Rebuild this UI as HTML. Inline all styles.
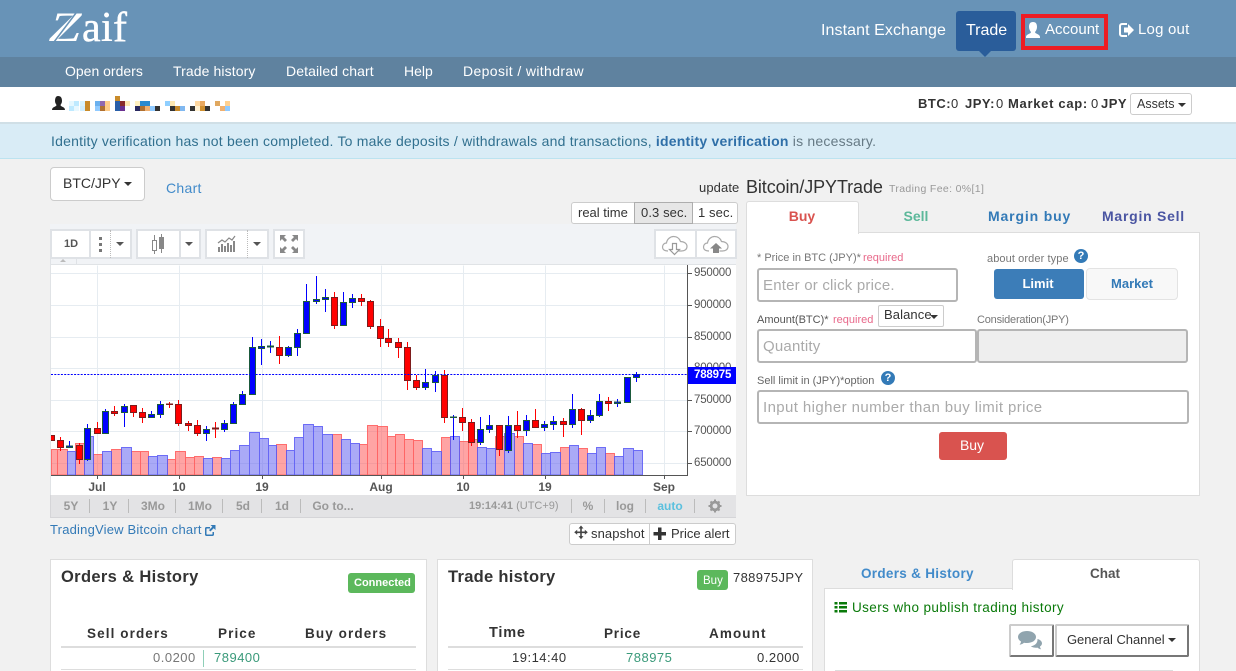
<!DOCTYPE html>
<html lang="en"><head><meta charset="utf-8"><title>Zaif BTC/JPY Trade</title>
<style>
html,body{margin:0;padding:0;width:1236px;height:671px;overflow:hidden;background:#f1f1f1}
body{position:relative;font-family:"Liberation Sans",sans-serif;font-size:13px;color:#333}
.t{position:absolute;white-space:nowrap;line-height:20px;height:20px}
.b{position:absolute;box-sizing:border-box}
.c{position:absolute;width:0;height:0;border-left:4px solid transparent;border-right:4px solid transparent;border-top:4px solid #333}
svg{position:absolute;left:0;top:0}
.w{color:#fff}
.ctr{text-align:center;transform:translateX(-50%)}
.bb{font-weight:bold;color:#999;font-size:12px}
.ax{font-size:11.500px;color:#555;letter-spacing:-.2px}
.xl{font-size:12px;font-weight:bold;color:#555}
.lb{font-size:11px;color:#777}
.ph{font-size:15px;color:#aaa;letter-spacing:.2px}
.inp{background:#fff;border:2px solid #b5b5b5;border-radius:3px}
.tb{background:#fff;border:2px solid #dfe2e6}
.th{font-weight:bold;font-size:13.500px;letter-spacing:1.1px;color:#333}
</style></head><body>

<div class="b" style="left:0;top:0;width:1236px;height:57px;background:#6893b7"></div>
<div class="b" style="left:0;top:57px;width:1236px;height:30px;background:#5f829f"></div>
<div class="b" style="left:0;top:87px;width:1236px;height:36px;background:#fff"></div>
<div class="b" style="left:0;top:122px;width:1236px;height:37px;background:#d9ecf6;border-top:2px solid #d0dfe6;border-bottom:1px solid #bce3f0"></div>

<svg width="1236" height="60" style="z-index:2">
<text x="0" y="41" transform="translate(50 0) skewX(-14) translate(7 0) scale(1.16 1)" font-family="Liberation Serif" font-weight="bold" font-size="42" fill="#fff">Z</text>
<path d="M54 42L76 13" stroke="#6893b7" stroke-width="1.500" fill="none"/>
<text x="82" y="41" font-family="Liberation Serif" font-size="42" fill="#fff" stroke="#fff" stroke-width=".4" textLength="45">aif</text>
</svg>

<span class="t w" style="left:821px;top:21px;font-size:16px;letter-spacing:.08px">Instant Exchange</span>
<div class="b" style="left:956px;top:11px;width:60px;height:40px;background:#2a5d9a;border-radius:3px"></div>
<div class="b" style="left:979px;top:51px;width:0;height:0;border-left:6px solid transparent;border-right:6px solid transparent;border-top:6px solid #2a5d9a"></div>
<span class="t w" style="left:966px;top:21px;font-size:16px">Trade</span>
<div class="b" style="left:1021px;top:14px;width:87px;height:36px;border:4px solid #ed1c24"></div>
<span class="t w" style="left:1045px;top:20px;font-size:15px">Account</span>
<span class="t w" style="left:1138px;top:20px;font-size:15px;letter-spacing:.2px">Log out</span>
<svg width="1236" height="60" style="z-index:2">
<path d="M1033 22c3 0 4 2 4 5 0 2-1 4-2 5 0 2 5 2 5 5v1h-14v-1c0-3 5-3 5-5-1-1-2-3-2-5 0-3 1-5 4-5z" fill="#fff"/>
<path d="M1127 24h-5a2 2 0 0 0-2 2v8a2 2 0 0 0 2 2h5" stroke="#fff" stroke-width="2" fill="none"/>
<path d="M1124 27.500h4V24l6 6-6 6v-3.500h-4z" fill="#fff"/>
</svg>

<span class="t w" style="left:65px;top:61px;font-size:14px">Open orders</span>
<span class="t w" style="left:173px;top:61px;font-size:14px;letter-spacing:.1px">Trade history</span>
<span class="t w" style="left:286px;top:61px;font-size:14px;letter-spacing:.1px">Detailed chart</span>
<span class="t w" style="left:404px;top:61px;font-size:14px">Help</span>
<span class="t w" style="left:463px;top:61px;font-size:14px;letter-spacing:.37px">Deposit / withdraw</span>

<svg width="240" height="120" style="z-index:2">
<path d="M58 96c3 0 4 2 4 5 0 2-1 3-1.500 4 0 2 4.500 1.500 4.500 5h-13c0-3.500 4.500-3 4.500-5-.5-1-1.500-2-1.500-4 0-3 1-5 3-5z" fill="#222"/>
<g shape-rendering="crispEdges">
<rect x="69" y="101" width="5" height="5" fill="#e6f8ff"/><rect x="74" y="101" width="5" height="5" fill="#bfeaff"/><rect x="80" y="101" width="5" height="5" fill="#d8f4ff"/><rect x="85" y="101" width="5" height="5" fill="#c98b2a"/>
<rect x="95" y="101" width="5" height="5" fill="#6ab0ee"/><rect x="100" y="101" width="5" height="5" fill="#9068b0"/><rect x="105" y="101" width="5" height="5" fill="#ffcc88"/>
<rect x="115" y="96" width="5" height="5" fill="#c98b2a"/><rect x="115" y="101" width="5" height="5" fill="#2a5fa8"/><rect x="120" y="101" width="5" height="5" fill="#8a2a2a"/><rect x="125" y="101" width="5" height="5" fill="#ffe6b0"/>
<rect x="135" y="101" width="5" height="5" fill="#fff0c0"/><rect x="140" y="101" width="10" height="5" fill="#2a8ad0"/>
<rect x="165" y="101" width="5" height="5" fill="#8fcfff"/><rect x="170" y="101" width="5" height="5" fill="#ffe8b0"/>
<rect x="195" y="101" width="5" height="5" fill="#ffd8a0"/><rect x="200" y="101" width="5" height="5" fill="#e8a860"/>
<rect x="215" y="101" width="5" height="5" fill="#e0a860"/><rect x="225" y="101" width="5" height="5" fill="#ffd090"/>
<rect x="69" y="106" width="5" height="5" fill="#bfeaff"/><rect x="74" y="106" width="5" height="5" fill="#e8f8ff"/><rect x="80" y="106" width="5" height="5" fill="#cfeeff"/><rect x="85" y="106" width="5" height="5" fill="#c98b2a"/>
<rect x="95" y="106" width="5" height="5" fill="#90caff"/><rect x="100" y="106" width="5" height="5" fill="#b07030"/><rect x="105" y="106" width="5" height="5" fill="#ffcc88"/>
<rect x="115" y="106" width="5" height="5" fill="#2a5fa8"/><rect x="120" y="106" width="5" height="5" fill="#6a3090"/>
<rect x="135" y="106" width="5" height="5" fill="#2a2a60"/><rect x="140" y="106" width="5" height="5" fill="#b07030"/><rect x="145" y="106" width="5" height="5" fill="#f0b070"/><rect x="150" y="106" width="5" height="5" fill="#90caff"/><rect x="155" y="106" width="5" height="5" fill="#333"/>
<rect x="170" y="106" width="5" height="5" fill="#333"/><rect x="175" y="106" width="5" height="5" fill="#c98b2a"/><rect x="180" y="106" width="5" height="5" fill="#80b8f0"/>
<rect x="190" y="106" width="5" height="5" fill="#333"/><rect x="195" y="106" width="5" height="5" fill="#fff0d0"/><rect x="200" y="106" width="5" height="5" fill="#d09030"/><rect x="205" y="106" width="5" height="5" fill="#333"/>
<rect x="220" y="106" width="5" height="5" fill="#f0b070"/><rect x="225" y="106" width="5" height="5" fill="#90caff"/>
</g></svg>

<span class="t" style="left:918px;top:94px;font-weight:bold;letter-spacing:.5px">BTC:</span>
<span class="t" style="left:951px;top:94px">0</span>
<span class="t" style="left:965px;top:94px;font-weight:bold;letter-spacing:.5px">JPY:</span>
<span class="t" style="left:996px;top:94px">0</span>
<span class="t" style="left:1008px;top:94px;font-weight:bold;letter-spacing:.7px">Market cap:</span>
<span class="t" style="left:1091px;top:94px">0</span>
<span class="t" style="left:1101px;top:94px;font-weight:bold;letter-spacing:.5px">JPY</span>
<div class="b" style="left:1130px;top:93px;width:62px;height:22px;background:#fff;border:1px solid #ccc;border-radius:3px"></div>
<span class="t" style="left:1137px;top:94px;font-size:12.500px">Assets</span>
<div class="c" style="left:1178px;top:103px"></div>

<span class="t" style="left:51px;top:131px;font-size:14px;color:#31708f;letter-spacing:.21px">Identity verification has not been completed. To make deposits / withdrawals and transactions, <b style="color:#2f6fa8">identity verification</b> <span style="color:#667a85">is necessary.</span></span>

<div class="b" style="left:50px;top:167px;width:95px;height:34px;background:#fff;border:1px solid #ccc;border-radius:4px"></div>
<span class="t" style="left:63px;top:173px;font-size:14px">BTC/JPY</span>
<div class="c" style="left:124px;top:182px"></div>
<span class="t" style="left:166px;top:178px;font-size:14px;color:#428bca;letter-spacing:.3px">Chart</span>
<span class="t" style="left:699px;top:178px;font-size:13px;letter-spacing:.1px">update</span>

<div class="b" style="left:50px;top:224px;width:686px;height:294px;background:#f1f3f6"></div>

<div class="b" style="left:571px;top:202px;width:167px;height:22px;background:#fff;border:1px solid #ccc;border-radius:3px"></div>
<div class="b" style="left:634px;top:202px;width:59px;height:22px;background:#e6e6e6;border:1px solid #adadad"></div>
<span class="t" style="left:578px;top:203px">real time</span>
<span class="t" style="left:641px;top:203px;letter-spacing:.1px">0.3 sec.</span>
<span class="t" style="left:698px;top:203px;letter-spacing:.1px">1 sec.</span>

<div class="b tb" style="left:50px;top:229px;width:82px;height:30px"></div>
<div class="b" style="left:89px;top:230px;width:2px;height:28px;background:#dfe2e6"></div>
<div class="b" style="left:110px;top:230px;width:0;height:28px;border-left:1px dotted #bbb"></div>
<span class="t" style="left:64px;top:234px;font-size:11px;color:#555;font-weight:bold">1D</span>
<div class="b" style="left:99px;top:237px;width:3px;height:3px;background:#777"></div>
<div class="b" style="left:99px;top:243px;width:3px;height:3px;background:#777"></div>
<div class="b" style="left:99px;top:249px;width:3px;height:3px;background:#777"></div>
<div class="c" style="left:116px;top:242px;border-top-color:#555"></div>
<div class="b tb" style="left:136px;top:229px;width:65px;height:30px"></div>
<div class="b" style="left:179px;top:230px;width:2px;height:28px;background:#dfe2e6"></div>
<div class="c" style="left:185px;top:242px;border-top-color:#555"></div>
<div class="b tb" style="left:205px;top:229px;width:64px;height:30px"></div>
<div class="b" style="left:247px;top:230px;width:0;height:28px;border-left:1px dotted #bbb"></div>
<div class="c" style="left:253px;top:242px;border-top-color:#555"></div>
<div class="b tb" style="left:273px;top:229px;width:32px;height:30px"></div>
<div class="b tb" style="left:654px;top:229px;width:83px;height:30px"></div>
<div class="b" style="left:695px;top:230px;width:2px;height:28px;background:#dfe2e6"></div>
<div class="b" style="left:50px;top:259px;width:27px;height:6px;background:#f1f3f6;border-right:1px solid #dfe2e6;border-left:1px solid #dfe2e6"></div>
<div class="b" style="left:60px;top:259px;width:0;height:0;border-left:3px solid transparent;border-right:3px solid transparent;border-bottom:3px solid #bbb"></div>

<div class="b" style="left:50px;top:264px;width:686px;height:231px;background:#fff;border-left:1px solid #e0e3e6;border-top:1px solid #e0e3e6"></div>

<svg width="1236" height="671" style="z-index:1">
<path d="M154.500 235V254" stroke="#888" fill="none"/><rect x="152.500" y="240.500" width="4" height="10" fill="#fff" stroke="#888"/>
<path d="M161.500 234V253" stroke="#888" fill="none"/><rect x="159" y="237" width="5" height="12" fill="#888"/>
<g fill="#888">
<rect x="218" y="247" width="2" height="5"/><rect x="221" y="244" width="2" height="8"/><rect x="224" y="246" width="2" height="6"/><rect x="227" y="243" width="2" height="9"/><rect x="230" y="245" width="2" height="7"/><rect x="233" y="241" width="2" height="11"/>
</g>
<path d="M218 243l4-3 3 2 4-4 3 2 3-4" stroke="#888" stroke-width="1.200" fill="none"/>
<path d="M280 235h6l-2 2 3 3-2 2-3-3-2 2zM298 235v6l-2-2-3 3-2-2 3-3-2-2zM280 253v-6l2 2 3-3 2 2-3 3 2 2zM298 253h-6l2-2-3-3 2-2 3 3 2-2z" fill="#888"/>
<path d="M668 251c-4 0-5.500-2-5.500-4 0-2.500 2-4 4-4 .5-4 4-6.500 7-6.500 3.500 0 6 2 7 5 3.500 0 6.500 2 6.500 5s-2.500 4.500-5.500 4.500h-3" fill="none" stroke="#aaa" stroke-width="1.200"/>
<path d="M672.500 243.500h4v6h3l-5 5-5-5h3z" fill="#fff" stroke="#999" stroke-width="1.200"/>
<path d="M709 251c-4 0-5.500-2-5.500-4 0-2.500 2-4 4-4 .5-4 4-6.500 7-6.500 3.500 0 6 2 7 5 3.500 0 6.500 2 6.500 5s-2.500 4.500-5.500 4.500h-3" fill="none" stroke="#aaa" stroke-width="1.200"/>
<path d="M716 243l6 5.500h-3V253h-6v-4.500h-3z" fill="#888"/>

<g stroke="#e6ecf1" stroke-width="1">
<path d="M97.500 265.500V475M179.500 265.500V475M262.500 265.500V475M381.500 265.500V475M463.500 265.500V475M545.500 265.500V475M664.500 265.500V475"/>
<path d="M51 273.500H687M51 305.500H687M51 337.500H687M51 368.500H687M51 400.500H687M51 431.500H687M51 463.500H687"/>
</g>

<svg x="51" y="265" width="636" height="210" viewBox="51 265 636 210" style="position:static;overflow:hidden">
<path fill="#ff5a5a" fill-opacity=".55" stroke="#ff5a5a" stroke-opacity=".85" d="M51.500 449.500H57.500V475H51.500zM57.500 449.500H67.500V475H57.500zM75.500 443.500H84.500V475H75.500zM93.500 454.500H102.500V475H93.500zM111.500 449.500H121.500V475H111.500zM131.500 451.500H140.500V475H131.500zM140.500 451.500H148.500V475H140.500zM167.500 459.500H175.500V475H167.500zM175.500 451.500H185.500V475H175.500zM185.500 457.500H194.500V475H185.500zM194.500 456.500H203.500V475H194.500zM212.500 457.500H221.500V475H212.500zM276.500 444.500H286.500V475H276.500zM332.500 434.500H341.500V475H332.500zM359.500 444.500H367.500V475H359.500zM367.500 425.500H377.500V475H367.500zM377.500 426.500H387.500V475H377.500zM387.500 436.500H395.500V475H387.500zM395.500 434.500H404.500V475H395.500zM404.500 439.500H413.500V475H404.500zM413.500 440.500H422.500V475H413.500zM441.500 437.500H450.500V475H441.500zM459.500 441.500H468.500V475H459.500zM468.500 439.500H477.500V475H468.500zM495.500 436.500H504.500V475H495.500zM514.500 436.500H523.500V475H514.500zM532.500 444.500H541.500V475H532.500zM560.500 447.500H569.500V475H560.500zM578.500 448.500H587.500V475H578.500zM605.500 453.500H614.500V475H605.500z"/>
<path fill="#6464f0" fill-opacity=".55" stroke="#5a5af5" stroke-opacity=".85" d="M67.500 451.500H75.500V475H67.500zM84.500 436.500H93.500V475H84.500zM102.500 451.500H111.500V475H102.500zM121.500 447.500H131.500V475H121.500zM148.500 456.500H157.500V475H148.500zM157.500 455.500H167.500V475H157.500zM203.500 458.500H212.500V475H203.500zM221.500 458.500H230.500V475H221.500zM230.500 450.500H239.500V475H230.500zM239.500 445.500H249.500V475H239.500zM249.500 432.500H259.500V475H249.500zM259.500 438.500H268.500V475H259.500zM268.500 445.500H276.500V475H268.500zM286.500 450.500H294.500V475H286.500zM294.500 437.500H303.500V475H294.500zM303.500 424.500H313.500V475H303.500zM313.500 426.500H322.500V475H313.500zM322.500 434.500H332.500V475H322.500zM341.500 439.500H350.500V475H341.500zM350.500 443.500H359.500V475H350.500zM422.500 448.500H431.500V475H422.500zM431.500 451.500H441.500V475H431.500zM450.500 436.500H459.500V475H450.500zM477.500 447.500H486.500V475H477.500zM486.500 448.500H495.500V475H486.500zM504.500 433.500H514.500V475H504.500zM523.500 443.500H532.500V475H523.500zM541.500 453.500H550.500V475H541.500zM550.500 452.500H560.500V475H550.500zM569.500 445.500H578.500V475H569.500zM587.500 453.500H596.500V475H587.500zM596.500 447.500H605.500V475H596.500zM614.500 456.500H623.500V475H614.500zM623.500 448.500H633.500V475H623.500zM633.500 450.500H642.500V475H633.500z"/>

<path stroke="#ff0000" fill="none" d="M60.500 437V451M79.500 443V464M97.500 422V433M114.500 406V416M133.500 405V417M142.500 408V423M169.500 402V408M178.500 400V426M188.500 421V431M197.500 420V436M215.500 422V438M279.500 336V364M334.500 292V329M361.500 294V306M370.500 300V329M380.500 319V347M388.500 329V347M398.500 338V358M407.500 342V390M416.500 375V390M444.500 370V423M462.500 408V431M471.500 419V446M499.500 425V456M517.500 411V438M535.500 409V428M563.500 418V437M581.500 408V435M608.500 397V411"/>
<path stroke="#0000ff" fill="none" d="M69.500 441V448M87.500 424V461M105.500 409V434M124.500 404V427M151.500 411V417M160.500 401V418M206.500 426V441M224.500 420V432M233.500 402V423M242.500 391V404M252.500 337V394M261.500 339V365M270.500 341V353M288.500 346V357M297.500 329V356M306.500 284V333M316.500 276V304M325.500 289V312M343.500 292V325M352.500 294V308M425.500 369V390M435.500 371V392M453.500 415V440M480.500 417V445M489.500 415V433M508.500 416V453M526.500 415V436M544.500 421V431M553.500 416V430M572.500 394V428M590.500 410V423M599.500 394V417M617.500 399V407M627.500 377V402M636.500 372V382"/>
<path fill="#ff0000" stroke="#7d1c1c" d="M48.500 435.500h6v5h-6zM57.500 440.500h6v7h-6zM76.500 445.500h6v14h-6zM94.500 428.500h6v5h-6zM111.500 411.500h6v2h-6zM130.500 405.500h6v7h-6zM139.500 412.500h6v5h-6zM166.500 404h6v.5h-6zM175.500 404.500h6v19h-6zM185.500 423.500h6v2h-6zM194.500 425.500h6v8h-6zM212.500 428h6v1h-6zM276.500 347.500h6v8h-6zM331.500 297.500h6v28h-6zM358.500 298.500h6v3h-6zM367.500 301.500h6v25h-6zM377.500 326.500h6v12h-6zM385.500 338.500h6v4h-6zM395.500 342.500h6v5h-6zM404.500 347.500h6v33h-6zM413.500 380.500h6v7h-6zM441.500 375.500h6v42h-6zM459.500 417.500h6v5h-6zM468.500 422.500h6v20h-6zM496.500 425.500h6v24h-6zM514.500 425.500h6v5h-6zM532.500 420.500h6v7h-6zM560.500 421.500h6v3h-6zM578.500 409.500h6v11h-6zM605.500 401.500h6v2h-6z"/>
<path fill="#0000ff" stroke="#1b5a3c" d="M66.500 446h6v1.500h-6zM84.500 428.500h6v31h-6zM102.500 411.500h6v22h-6zM121.500 406.500h6v6h-6zM148.500 414.500h6v3h-6zM157.500 404.500h6v10h-6zM203.500 429.500h6v4h-6zM221.500 423.500h6v6h-6zM230.500 404.500h6v19h-6zM239.500 394.500h6v10h-6zM249.500 347.500h6v47h-6zM258.500 346.500h6v2h-6zM267.500 346h6v1h-6zM285.500 347.500h6v8h-6zM294.500 333.500h6v14h-6zM303.500 301.500h6v32h-6zM313.500 299.500h6v2h-6zM322.500 297.500h6v2h-6zM340.500 302.500h6v23h-6zM349.500 298.500h6v4h-6zM422.500 382.500h6v5h-6zM432.500 375.500h6v7h-6zM450.500 417h6v.5h-6zM477.500 429.500h6v13h-6zM486.500 425.500h6v4h-6zM505.500 425.500h6v25h-6zM523.500 420.500h6v10h-6zM541.500 424.500h6v3h-6zM550.500 421.500h6v3h-6zM569.500 409.500h6v15h-6zM587.500 415.500h6v5h-6zM596.500 401.500h6v14h-6zM614.500 402h6v1.500h-6zM624.500 377.500h6v25h-6zM633.500 374.500h6v3h-6z"/>
</svg>

<path d="M51 374.500H687" stroke="#0000ff" stroke-dasharray="2 1.300" fill="none"/>
<path d="M51 475.500H688M687.500 265V476" stroke="#555" stroke-width="1" fill="none"/>
<path d="M97.500 476V479M179.500 476V479M262.500 476V479M381.500 476V479M463.500 476V479M545.500 476V479M664.500 476V479M688 273.500h4M688 305.500h4M688 337.500h4M688 400.500h4M688 431.500h4M688 463.500h4" stroke="#555" fill="none"/>

<path d="M207 527h3v1.500h-3c-.5 0-.5.3-.5.5v5c0 .5.300.5.500.5h5c.3 0 .5-.2.5-.5v-2h1.500v2.500c0 1-.8 1.500-1.500 1.500h-6c-1 0-1.500-.7-1.500-1.500v-6c0-1 .6-1.500 1.500-1.500zM210.500 525H215.500v5l-1.800-1.800-3.300 3.300-1.400-1.400 3.300-3.300z" fill="#337ab7"/>
<circle cx="715" cy="506" r="4" fill="none" stroke="#999" stroke-width="2.500"/>
<path d="M715 499.500v13M708.500 506h13M710.500 501.500l9 9M719.500 501.500l-9 9" stroke="#999" stroke-width="2" fill="none"/>
<circle cx="715" cy="506" r="2.500" fill="#e3e3e5"/>
</svg>

<span class="t ax" style="left:694px;top:263px;z-index:2">950000</span>
<span class="t ax" style="left:694px;top:295px;z-index:2">900000</span>
<span class="t ax" style="left:694px;top:327px;z-index:2">850000</span>
<span class="t ax" style="left:694px;top:358px;z-index:2">800000</span>
<span class="t ax" style="left:694px;top:390px;z-index:2">750000</span>
<span class="t ax" style="left:694px;top:421px;z-index:2">700000</span>
<span class="t ax" style="left:694px;top:453px;z-index:2">650000</span>
<div class="b" style="left:688px;top:367px;width:48px;height:17px;background:#0000ff;z-index:2"></div>
<span class="t" style="left:694px;top:365px;font-size:11.500px;font-weight:bold;color:#fff;letter-spacing:-.2px;z-index:3">788975</span>

<span class="t xl ctr" style="left:97px;top:477px;z-index:2">Jul</span>
<span class="t xl ctr" style="left:179px;top:477px;z-index:2">10</span>
<span class="t xl ctr" style="left:262px;top:477px;z-index:2">19</span>
<span class="t xl ctr" style="left:381px;top:477px;z-index:2">Aug</span>
<span class="t xl ctr" style="left:463px;top:477px;z-index:2">10</span>
<span class="t xl ctr" style="left:545px;top:477px;z-index:2">19</span>
<span class="t xl ctr" style="left:664px;top:477px;z-index:2">Sep</span>

<div class="b" style="left:50px;top:495px;width:686px;height:23px;background:#e3e3e5;border-left:1px solid #d5d5d8;border-bottom:1px solid #d5d5d8"></div>
<span class="t bb ctr" style="left:71px;top:496px">5Y</span>
<span class="t bb ctr" style="left:110px;top:496px">1Y</span>
<span class="t bb ctr" style="left:153px;top:496px">3Mo</span>
<span class="t bb ctr" style="left:200px;top:496px">1Mo</span>
<span class="t bb ctr" style="left:243px;top:496px">5d</span>
<span class="t bb ctr" style="left:282px;top:496px">1d</span>
<span class="t bb ctr" style="left:333px;top:496px">Go to...</span>
<span class="t bb" style="left:469px;top:496px;font-size:11px">19:14:41 <span style="font-weight:normal">(UTC+9)</span></span>
<span class="t bb ctr" style="left:588px;top:496px">%</span>
<span class="t bb ctr" style="left:625px;top:496px">log</span>
<span class="t bb ctr" style="left:670px;top:496px;color:#5bc0de">auto</span>
<div class="b" style="left:89px;top:499px;width:1px;height:14px;background:#bbb"></div>
<div class="b" style="left:128px;top:499px;width:1px;height:14px;background:#bbb"></div>
<div class="b" style="left:175px;top:499px;width:1px;height:14px;background:#bbb"></div>
<div class="b" style="left:222px;top:499px;width:1px;height:14px;background:#bbb"></div>
<div class="b" style="left:261px;top:499px;width:1px;height:14px;background:#bbb"></div>
<div class="b" style="left:300px;top:499px;width:1px;height:14px;background:#bbb"></div>
<div class="b" style="left:571px;top:499px;width:1px;height:14px;background:#bbb"></div>
<div class="b" style="left:604px;top:499px;width:1px;height:14px;background:#bbb"></div>
<div class="b" style="left:645px;top:499px;width:1px;height:14px;background:#bbb"></div>
<div class="b" style="left:694px;top:499px;width:1px;height:14px;background:#bbb"></div>

<span class="t" style="left:50px;top:520px;color:#337ab7;letter-spacing:.2px">TradingView Bitcoin chart</span>
<div class="b" style="left:569px;top:523px;width:167px;height:22px;background:#fff;border:1px solid #ccc;border-radius:3px"></div>
<div class="b" style="left:649px;top:523px;width:1px;height:22px;background:#ccc"></div>
<span class="t" style="left:591px;top:524px;letter-spacing:.1px">snapshot</span>
<span class="t" style="left:671px;top:524px">Price alert</span>
<svg width="740" height="560" style="z-index:3">
<path d="M581 525.500l2.500 3h-1.700v3h3v-1.700l3 2.500-3 2.500v-1.700h-3v3h1.700l-2.500 3-2.500-3h1.700v-3h-3v1.700l-3-2.500 3-2.500v1.700h3v-3h-1.700z" fill="#444"/>
<path d="M658 527.500h3.500V532H666v3.500h-4.500V540H658v-4.500h-4.500V532h4.500z" fill="#333"/>
</svg>

<span class="t" style="left:746px;top:177px;font-size:18px;letter-spacing:-.1px">Bitcoin/JPYTrade</span>
<span class="t" style="left:889px;top:179px;font-size:10.500px;color:#999;letter-spacing:.35px">Trading Fee: 0%[1]</span>
<div class="b" style="left:746px;top:232px;width:454px;height:264px;background:#fff;border:1px solid #ddd"></div>
<div class="b" style="left:746px;top:201px;width:113px;height:33px;background:#fff;border:1px solid #ddd;border-bottom:0;border-radius:3px 3px 0 0"></div>
<span class="t ctr" style="left:802px;top:206px;font-size:14px;font-weight:bold;color:#d9534f">Buy</span>
<span class="t ctr" style="left:916px;top:206px;font-size:14px;font-weight:bold;color:#5cb89a">Sell</span>
<span class="t" style="left:988px;top:206px;font-size:14px;font-weight:bold;color:#337ab7;letter-spacing:.85px">Margin buy</span>
<span class="t" style="left:1102px;top:206px;font-size:14px;font-weight:bold;color:#4a55a2;letter-spacing:.75px">Margin Sell</span>

<span class="t lb" style="left:757px;top:248px">* Price in BTC (JPY)*</span>
<span class="t lb" style="left:863px;top:248px;color:#e8688a">required</span>
<span class="t lb" style="left:987px;top:249px;letter-spacing:.1px">about order type</span>
<div class="b inp" style="left:757px;top:268px;width:201px;height:34px"></div>
<span class="t ph" style="left:763px;top:276px">Enter or click price.</span>
<div class="b" style="left:994px;top:269px;width:90px;height:30px;background:#3c7db8;border-radius:3px"></div>
<span class="t ctr w" style="left:1038px;top:274px;font-weight:bold">Limit</span>
<div class="b" style="left:1086px;top:268px;width:92px;height:32px;background:#f8f8f8;border:1px solid #e3e3e3;border-radius:4px"></div>
<span class="t ctr" style="left:1132px;top:274px;font-weight:bold;color:#337ab7">Market</span>
<span class="t lb" style="left:757px;top:310px;color:#555">Amount(BTC)*</span>
<span class="t lb" style="left:833px;top:310px;color:#e8688a">required</span>
<div class="b" style="left:878px;top:305px;width:66px;height:22px;background:#fff;border:1px solid #ccc;border-radius:2px"></div>
<span class="t" style="left:884px;top:305px;font-size:13px;letter-spacing:.1px">Balance</span>
<div class="c" style="left:930px;top:315px"></div>
<span class="t lb" style="left:977px;top:310px;letter-spacing:-.2px">Consideration(JPY)</span>
<div class="b inp" style="left:757px;top:329px;width:220px;height:34px"></div>
<span class="t ph" style="left:763px;top:337px">Quantity</span>
<div class="b inp" style="left:977px;top:329px;width:211px;height:34px;background:#eee"></div>
<span class="t lb" style="left:757px;top:371px;color:#666">Sell limit in (JPY)*option</span>
<div class="b inp" style="left:757px;top:390px;width:432px;height:34px"></div>
<span class="t ph" style="left:763px;top:398px;letter-spacing:.4px">Input higher number than buy limit price</span>
<div class="b" style="left:939px;top:432px;width:68px;height:28px;background:#d9534f;border-radius:3px"></div>
<span class="t ctr w" style="left:972px;top:435px;font-size:14px">Buy</span>
<div class="b" style="left:1074px;top:249px;width:14px;height:14px;border-radius:50%;background:#337ab7;color:#fff;font:bold 11px/14px 'Liberation Sans',sans-serif;text-align:center">?</div>
<div class="b" style="left:881px;top:371px;width:14px;height:14px;border-radius:50%;background:#337ab7;color:#fff;font:bold 11px/14px 'Liberation Sans',sans-serif;text-align:center">?</div>

<div class="b" style="left:50px;top:559px;width:377px;height:120px;background:#fff;border:1px solid #ddd"></div>
<span class="t" style="left:61px;top:567px;font-size:16.500px;font-weight:bold;letter-spacing:.35px">Orders &amp; History</span>
<div class="b" style="left:348px;top:573px;width:67px;height:20px;background:#5cb85c;border-radius:3px"></div>
<span class="t w" style="left:354px;top:573px;font-size:11px;font-weight:bold">Connected</span>
<span class="t th" style="left:87px;top:624px">Sell orders</span>
<span class="t th" style="left:218px;top:624px">Price</span>
<span class="t th" style="left:305px;top:624px">Buy orders</span>
<div class="b" style="left:61px;top:646px;width:355px;height:2px;background:#ddd"></div>
<span class="t" style="left:153px;top:648px;color:#777;letter-spacing:.5px">0.0200</span>
<div class="b" style="left:203px;top:650px;width:1px;height:17px;background:#8fcfb8"></div>
<span class="t" style="left:214px;top:648px;color:#3a9a7a;letter-spacing:.5px">789400</span>
<div class="b" style="left:61px;top:669px;width:355px;height:1px;background:#ddd"></div>

<div class="b" style="left:437px;top:559px;width:376px;height:120px;background:#fff;border:1px solid #ddd"></div>
<span class="t" style="left:448px;top:567px;font-size:16.500px;font-weight:bold;letter-spacing:.3px">Trade history</span>
<div class="b" style="left:697px;top:570px;width:31px;height:20px;background:#5cb85c;border-radius:3px"></div>
<span class="t w" style="left:703px;top:571px;font-size:11.500px">Buy</span>
<span class="t" style="left:733px;top:568px;letter-spacing:.35px">788975JPY</span>
<span class="t th" style="left:489px;top:623px;font-size:14.500px;letter-spacing:.8px">Time</span>
<span class="t th" style="left:604px;top:624px;letter-spacing:.8px">Price</span>
<span class="t th" style="left:709px;top:624px">Amount</span>
<div class="b" style="left:448px;top:646px;width:355px;height:2px;background:#ddd"></div>
<span class="t" style="left:512px;top:648px;letter-spacing:.5px">19:14:40</span>
<span class="t" style="left:626px;top:648px;color:#3a9a7a;letter-spacing:.5px">788975</span>
<span class="t" style="left:757px;top:648px;letter-spacing:.5px">0.2000</span>
<div class="b" style="left:448px;top:669px;width:355px;height:1px;background:#ddd"></div>

<div class="b" style="left:824px;top:588px;width:376px;height:90px;background:#fff;border:1px solid #ddd"></div>
<div class="b" style="left:1012px;top:559px;width:188px;height:31px;background:#fff;border:1px solid #ddd;border-bottom:0;border-radius:3px 3px 0 0"></div>
<span class="t" style="left:861px;top:564px;font-size:13.500px;font-weight:bold;color:#428bca;letter-spacing:.3px">Orders &amp; History</span>
<span class="t" style="left:1090px;top:564px;font-size:13.500px;font-weight:bold;color:#555">Chat</span>
<span class="t" style="left:852px;top:598px;font-size:13.500px;color:#0a7a0a;letter-spacing:.4px">Users who publish trading history</span>
<div class="b" style="left:1009px;top:624px;width:45px;height:33px;background:#fff;border:2px solid;border-color:#ccc #777 #777 #ccc;border-radius:2px"></div>
<div class="b" style="left:1055px;top:624px;width:134px;height:33px;background:#fff;border:2px solid;border-color:#ccc #777 #777 #ccc;border-radius:2px"></div>
<span class="t" style="left:1067px;top:630px;letter-spacing:-.05px">General Channel</span>
<div class="c" style="left:1168px;top:638px"></div>
<div class="b" style="left:835px;top:670px;width:338px;height:1px;background:#ddd"></div>
<svg width="1236" height="671" style="z-index:3">
<path d="M834.500 602h3v2.500h-3zM839 602h8v2.500h-8zM834.500 606h3v2.500h-3zM839 606h8v2.500h-8zM834.500 610h3v2.500h-3zM839 610h8v2.500h-8z" fill="#0a7a0a"/>
<path d="M1027 631c5 0 9 2.500 9 6s-4 6-9 6c-1 0-2 0-3-.3-1.500 1.300-3 1.800-4.500 2 .8-1 1.500-2 1.500-3.200-1.900-1.100-3-2.800-3-4.500 0-3.500 4-6 9-6z" fill="#90a4ae"/>
<path d="M1037.500 639c2.500.6 4.500 2.300 4.500 4.300 0 1.300-.8 2.500-2 3.200 0 1 .5 2 1.200 2.800-1.400-.2-2.700-.8-3.700-1.700-2 .4-5 0-6.700-1.300 3.700-.5 7-3 6.700-7.300z" fill="#90a4ae"/>
</svg>
</body></html>
